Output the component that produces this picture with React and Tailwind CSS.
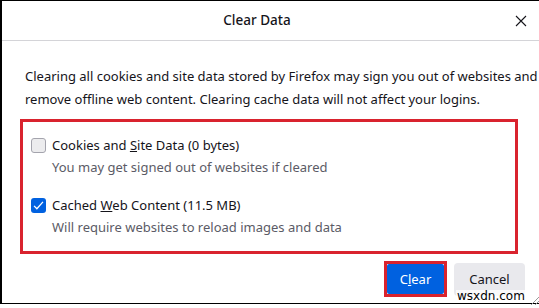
import React from "react";

const Checkbox = ({ checked }) =>
  checked ? (
    <div className="w-[15px] h-[15px] rounded-[3px] bg-[#0061e0] flex items-center justify-center shrink-0">
      <svg viewBox="0 0 16 16" className="w-[13px] h-[13px]" fill="none" stroke="white" strokeWidth="1.6">
        <path d="M2.5 8.5 L6 12 L13.5 3.5" />
      </svg>
    </div>
  ) : (
    <div className="w-[15px] h-[15px] rounded-[3px] bg-[#ececee] border border-[#a4a4ad] shrink-0" />
  );

const Option = ({ checked, label, sub }) => (
  <div>
    <div className="flex items-center gap-[6px] h-[20px]">
      <Checkbox checked={checked} />
      <span className="text-[#15141a]">{label}</span>
    </div>
    <div className="pl-[21px] mt-[2px] h-[20px] leading-[20px] text-[#5b5b66]">{sub}</div>
  </div>
);

export default function App() {
  return (
    <div
      className="w-[539px] h-[308px] bg-white relative overflow-hidden text-[13px] leading-[23px]"
      style={{ fontFamily: '"Noto Sans", "Open Sans", sans-serif' }}
    >
      <div className="h-[304px] border-l-2 border-t border-b border-black flex flex-col">
        {/* Header */}
        <div className="h-[40px] flex items-center border-b border-[#d4d4d8] shrink-0">
          <div className="flex-1 text-center pl-[3px] text-[13.5px] text-[#15141a] font-medium">Clear Data</div>
          <button className="w-[24px] h-[24px] mr-[6px] flex items-center justify-center">
            <svg viewBox="0 0 12 12" className="w-[12px] h-[12px]" stroke="#15141a" strokeWidth="1.1">
              <path d="M1 1 L11 11 M11 1 L1 11" />
            </svg>
          </button>
        </div>

        {/* Body */}
        <div className="pl-[23px] pr-[10px] pt-[24px] h-[71px] shrink-0 text-[#15141a] whitespace-nowrap">
          <p>Clearing all cookies and site data stored by Firefox may sign you out of websites and</p>
          <p>remove offline web content. Clearing cache data will not affect your logins.</p>
        </div>

        <div className="ml-[18px] mr-[21px] mt-[7px] h-[135px] shrink-0 border-[3px] border-[#d9232e] pl-[8px] pt-[13px] leading-[20px] flex flex-col gap-[18px]">
          <Option
            checked={false}
            label={
              <>
                Cookies and <span className="underline">S</span>ite Data (0 bytes)
              </>
            }
            sub="You may get signed out of websites if cleared"
          />
          <Option
            checked
            label={
              <>
                Cached <span className="underline">W</span>eb Content (11.5 MB)
              </>
            }
            sub="Will require websites to reload images and data"
          />
        </div>

        {/* Buttons */}
        <div className="flex justify-end items-center gap-[7px] pr-[14px] mt-[7px]">
          <div className="border-[3px] border-[#d9232e]">
            <button className="w-[57px] h-[30px] bg-[#0061e0] text-white rounded-[2px]">
              C<span className="underline">l</span>ear
            </button>
          </div>
          <button className="w-[71px] h-[33px] bg-[#e9e9ed] text-[#15141a] rounded-[4px]">Cancel</button>
        </div>
      </div>

      {/* watermark */}
      <div
        className="absolute left-[456px] top-[290px] text-[12px] leading-[13px] text-black bg-white/70 px-[1px]"
        style={{ fontFamily: '"DejaVu Sans", sans-serif' }}
      >
        wsxdn.com
      </div>
      {/* resize grip */}
      <svg className="absolute right-0 bottom-[3px] w-[8px] h-[8px]" viewBox="0 0 8 8" stroke="#999" strokeWidth="1">
        <path d="M8 0 L0 8 M8 4 L4 8" />
      </svg>
    </div>
  );
}
